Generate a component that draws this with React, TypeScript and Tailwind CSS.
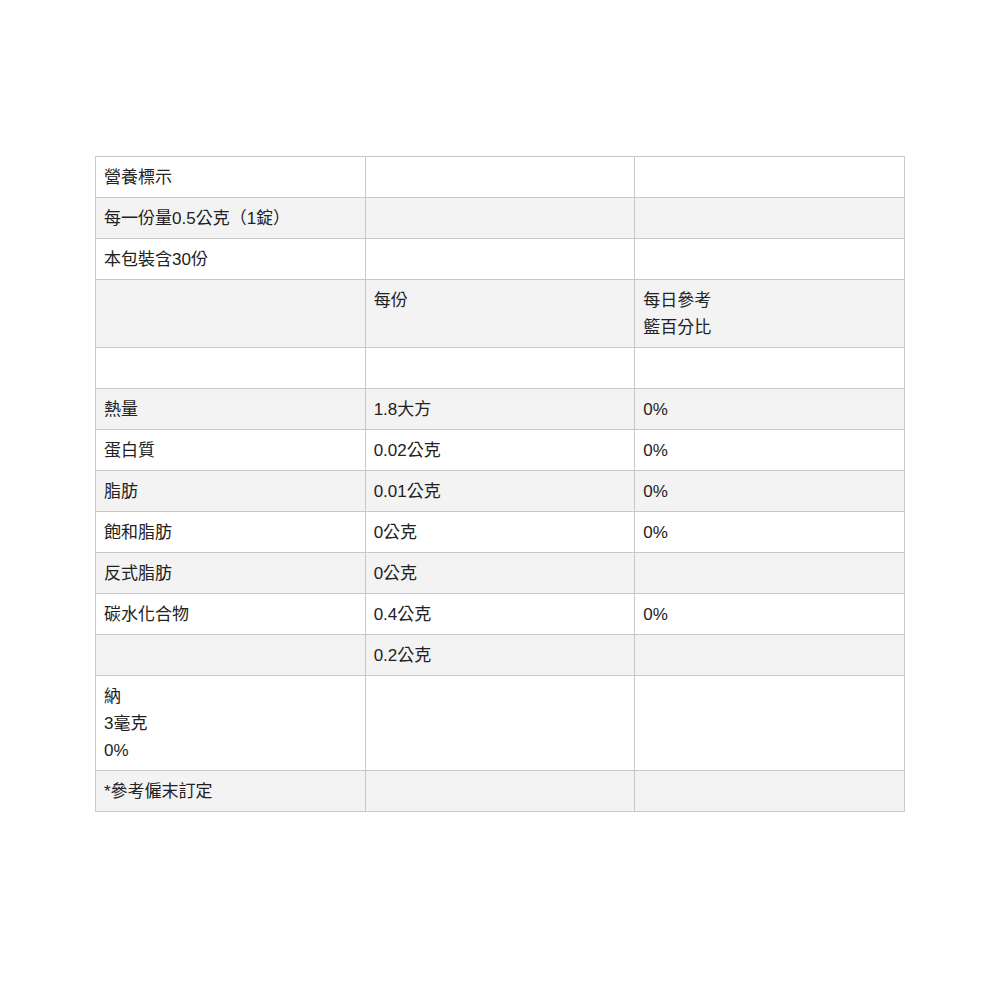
const rows: string[][] = [
  ["營養標示", "", ""],
  ["每一份量0.5公克（1錠）", "", ""],
  ["本包裝含30份", "", ""],
  ["", "每份", "每日參考\n籃百分比"],
  ["", "", ""],
  ["熱量", "1.8大方", "0%"],
  ["蛋白質", "0.02公克", "0%"],
  ["脂肪", "0.01公克", "0%"],
  ["飽和脂肪", "0公克", "0%"],
  ["反式脂肪", "0公克", ""],
  ["碳水化合物", "0.4公克", "0%"],
  ["", "0.2公克", ""],
  ["納\n3毫克\n0%", "", ""],
  ["*參考僱末訂定", "", ""],
];

export default function App() {
  return (
    <div className="w-[1000px] h-[1000px] bg-white pt-[156px] pl-[95px] font-['Liberation_Sans','Noto_Sans_CJK_TC',sans-serif] text-[#222]">
      <table className="w-[810px] table-fixed border-collapse border border-[#c8c8c8] text-[17px] leading-[27px]">
        <tbody>
          {rows.map((row, i) => (
            <tr key={i} className={i % 2 === 1 ? "bg-[#f3f3f3]" : "bg-white"}>
              {row.map((cell, j) => (
                <td
                  key={j}
                  className="border border-[#c8c8c8] px-[8px] pt-[7px] pb-[6px] align-top whitespace-pre-line"
                >
                  {cell === "" ? "\u00a0" : cell}
                </td>
              ))}
            </tr>
          ))}
        </tbody>
      </table>
    </div>
  );
}
